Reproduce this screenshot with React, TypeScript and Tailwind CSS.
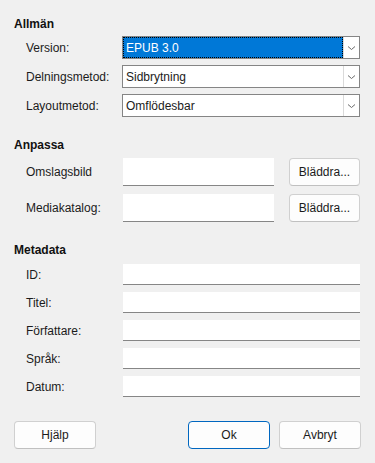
// EPUB export dialog (Swedish)

const font = { fontFamily: '"Segoe UI", "Liberation Sans", Arial, sans-serif' };

function Chevron() {
  return (
    <svg width="9" height="6" viewBox="0 0 9 6" fill="none">
      <path d="M1 1.5 L4.5 4.5 L8 1.5" stroke="#6b6b6b" strokeWidth="1" />
    </svg>
  );
}

function Dropdown({ value, selected = false }: { value: string; selected?: boolean }) {
  return (
    <div className="flex h-[23px] w-[238px] border border-[#858585] bg-white">
      <div
        className={
          selected
            ? 'flex flex-1 items-center border border-dotted border-black bg-[#0078d7] pl-[2px] text-white'
            : 'flex flex-1 items-center pl-[3px] text-[#1b1b1b]'
        }
      >
        {value}
      </div>
      <div className="flex w-[16px] items-center justify-center border-l border-[#dadada] bg-white">
        <Chevron />
      </div>
    </div>
  );
}

function Field({ width }: { width: string }) {
  return <div className={`h-full bg-white border-b border-[#868686] ${width}`} />;
}

function Button({ label, primary = false, className = '' }: { label: string; primary?: boolean; className?: string }) {
  return (
    <button
      className={`flex items-center justify-center rounded-[4px] bg-[#fdfdfd] text-[12px] text-[#1b1b1b] ${
        primary ? 'border border-[#0067c0]' : 'border border-[#d0d0d0] border-b-[#c0c0c0]'
      } ${className}`}
    >
      {label}
    </button>
  );
}

function Heading({ children }: { children: string }) {
  return <div className="h-[16px] text-[12px] font-bold leading-[16px] text-[#111]">{children}</div>;
}

export default function App() {
  const meta = ['ID:', 'Titel:', 'Författare:', 'Språk:', 'Datum:'];

  return (
    <div className="flex h-[463px] w-[375px] flex-col bg-[#f0f0f0] px-[14px] pt-[16px] text-[12px] text-[#1b1b1b]" style={font}>
      {/* Allmän */}
      <Heading>Allmän</Heading>
      <div className="mt-[4px] flex flex-col gap-[6px] pl-[12px]">
        <div className="flex items-center">
          <div className="w-[96px]">Version:</div>
          <Dropdown value="EPUB 3.0" selected />
        </div>
        <div className="flex items-center">
          <div className="w-[96px]">Delningsmetod:</div>
          <Dropdown value="Sidbrytning" />
        </div>
        <div className="flex items-center">
          <div className="w-[96px]">Layoutmetod:</div>
          <Dropdown value="Omflödesbar" />
        </div>
      </div>

      {/* Anpassa */}
      <div className="mt-[20px]">
        <Heading>Anpassa</Heading>
      </div>
      <div className="mt-[5px] flex flex-col gap-[8px] pl-[12px]">
        {['Omslagsbild', 'Mediakatalog:'].map((l) => (
          <div key={l} className="flex h-[28px] items-center">
            <div className="w-[97px]">{l}</div>
            <Field width="w-[151px]" />
            <Button label="Bläddra..." className="ml-[15px] h-[28px] w-[71px]" />
          </div>
        ))}
      </div>

      {/* Metadata */}
      <div className="mt-[20px]">
        <Heading>Metadata</Heading>
      </div>
      <div className="mt-[6px] flex flex-col gap-[7px] pl-[12px]">
        {meta.map((l) => (
          <div key={l} className="flex h-[21px] items-center">
            <div className="w-[97px]">{l}</div>
            <Field width="w-[237px]" />
          </div>
        ))}
      </div>

      {/* Footer buttons */}
      <div className="mt-[24px] flex h-[28px]">
        <Button label="Hjälp" className="w-[82px]" />
        <div className="flex-1" />
        <Button label="Ok" primary className="w-[82px]" />
        <Button label="Avbryt" className="ml-[9px] w-[82px]" />
      </div>
    </div>
  );
}
